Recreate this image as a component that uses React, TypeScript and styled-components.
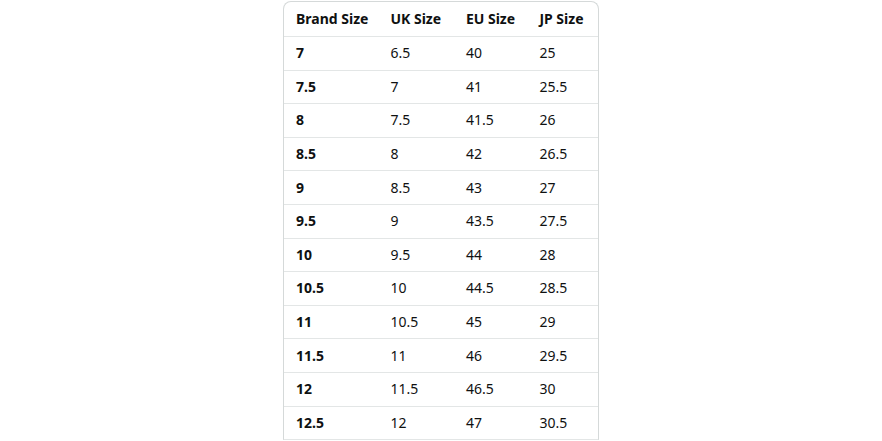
import React from 'react';
import styled, { createGlobalStyle } from 'styled-components';

const GlobalStyle = createGlobalStyle`
    html, body {
        margin: 0;
        padding: 0;
        background: #ffffff;
        overflow: hidden;
    }
    body {
        font-family: 'Noto Sans', 'Open Sans', Arial, sans-serif;
        color: #0f1111;
    }
`;

const Page = styled('div')`
    display: flex;
    justify-content: center;
    padding-top: 1px;
    height: 440px;
    overflow: hidden;
`;

const Table = styled('table')`
    width: 316px;
    height: max-content;
    border-collapse: separate;
    border-spacing: 0;
    border: 1px solid #d5d9d9;
    border-bottom-color: #e3e6e6;
    border-radius: 8px 8px 0 0;
    font-size: 14px;
    line-height: 20px;
`;

const HeadCell = styled('th')`
    height: 34px;
    padding: 0 0 0 12px;
    text-align: left;
    font-weight: 700;
    box-sizing: border-box;
`;

const Cell = styled('td')<{ bold?: boolean }>`
    height: 33.6px;
    padding: 0 0 0 12px;
    text-align: left;
    font-weight: ${(props) => (props.bold ? 700 : 400)};
    border-top: 1px solid #e3e6e6;
    box-sizing: border-box;
`;

const COLUMNS = ['Brand Size', 'UK Size', 'EU Size', 'JP Size'];
const WIDTHS = [95, 76, 74, 71];

const ROWS = [
    ['7', '6.5', '40', '25'],
    ['7.5', '7', '41', '25.5'],
    ['8', '7.5', '41.5', '26'],
    ['8.5', '8', '42', '26.5'],
    ['9', '8.5', '43', '27'],
    ['9.5', '9', '43.5', '27.5'],
    ['10', '9.5', '44', '28'],
    ['10.5', '10', '44.5', '28.5'],
    ['11', '10.5', '45', '29'],
    ['11.5', '11', '46', '29.5'],
    ['12', '11.5', '46.5', '30'],
    ['12.5', '12', '47', '30.5'],
];

export default function App() {
    return (
        <>
            <GlobalStyle />
            <Page>
                <Table>
                    <colgroup>
                        {WIDTHS.map((w, i) => (
                            <col key={i} style={{ width: w }} />
                        ))}
                    </colgroup>
                    <thead>
                        <tr>
                            {COLUMNS.map((c) => (
                                <HeadCell key={c}>{c}</HeadCell>
                            ))}
                        </tr>
                    </thead>
                    <tbody>
                        {ROWS.map((row) => (
                            <tr key={row[0]}>
                                {row.map((v, i) => (
                                    <Cell key={i} bold={i === 0}>
                                        {v}
                                    </Cell>
                                ))}
                            </tr>
                        ))}
                    </tbody>
                </Table>
            </Page>
        </>
    );
}
